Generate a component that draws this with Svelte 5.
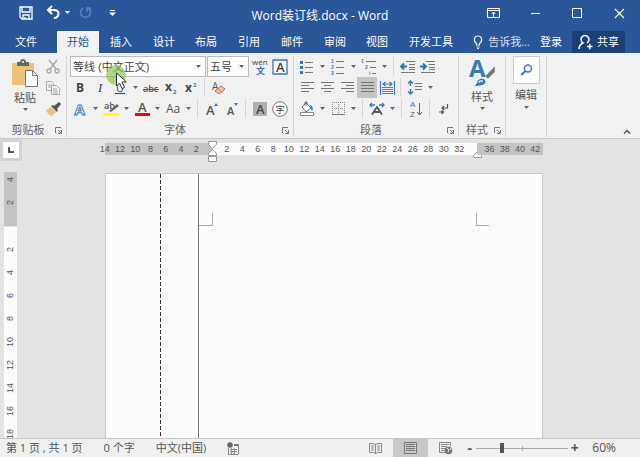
<script lang="ts">
  type Icon = { w: number; h: number; body: string };
  type Tool = { icon?: string; label?: string; arrow?: boolean; active?: boolean; sep?: boolean };

  const tabs = ['开始', '插入', '设计', '布局', '引用', '邮件', '审阅', '视图', '开发工具'];
  let activeTab = $state('开始');
  let zoom = $state(27);

  const lines = (rows: number[][]) =>
    `<g stroke="#777">${rows.map(([x1, x2, y]) => `<path d="M${x1} ${y}H${x2}"/>`).join('')}</g>`;

  const icons: Record<string, Icon> = {
    save: { w: 14, h: 14, body: '<path d="M1 1h12v12H3l-2-2zM3 1v5h8V1M4 13V9h6v4M6 11v2" fill="none" stroke="#fff" stroke-width="1.3"/>' },
    undo: { w: 14, h: 13, body: '<path d="M2 4h6c6 0 6 7 0 8M6 0L2 4l4 4" fill="none" stroke="#fff" stroke-width="2"/>' },
    redo: { w: 13, h: 13, body: '<path d="M4 2a5 5 0 1 0 5 0M8 6V2h4" fill="none" stroke="#5c81bd" stroke-width="1.6"/>' },
    custom: { w: 7, h: 7, body: '<path d="M1 1.5h5" stroke="#fff"/><path d="M0 3.500h7L3.500 7z" fill="#fff"/>' },
    ribbonOpts: { w: 13, h: 10, body: '<path d="M.5.500h12v9H.5zM.5 2.500h12M6.500 9V4M4.500 6l2-2 2 2" fill="none" stroke="#fff"/>' },
    minimize: { w: 11, h: 11, body: '<path d="M1 5.500h9" stroke="#fff"/>' },
    maximize: { w: 10, h: 10, body: '<path d="M.5.500h9v9H.5z" fill="none" stroke="#fff"/>' },
    close: { w: 11, h: 11, body: '<path d="M1 1l9 9M10 1l-9 9" stroke="#fff" stroke-width="1.1"/>' },
    bulb: { w: 10, h: 14, body: '<path d="M3.500 10V8.500C0 6 1 1 5 1s5 5 1.500 7.500V10zM3.500 12h3M4 13.500h2" fill="none" stroke="#e3ebf7" stroke-width="1.200"/>' },
    share: { w: 15, h: 15, body: '<path d="M1 14c0-4 2-5 4-6a4 4 0 1 1 4 0M9 11.500h5.500M11.800 8.800v5.500" fill="none" stroke="#fff" stroke-width="1.500"/>' },
    paste: { w: 28, h: 29, body: '<path d="M1 4h22v22H1z" fill="#ebc377"/><path d="M6 7V3h3c0-4 6-4 6 0h3v4z" fill="#666"/><circle cx="12" cy="3" r="1" fill="#fff"/><path d="M14.500 11.500h7l5 5v11h-12z" fill="#fff" stroke="#777"/><path d="M21.500 11.500v5h5" fill="none" stroke="#777"/>' },
    cut: { w: 14, h: 14, body: '<g fill="none" stroke="#aaa" stroke-width="1.400"><path d="M3 0l7 9M11 0L4 9"/><circle cx="3" cy="11" r="2"/><circle cx="11" cy="11" r="2"/></g>' },
    copy: { w: 14, h: 14, body: '<g fill="#f4f4f4" stroke="#aaa"><path d="M.5.500h5l2 2v7h-7zM2 4h4M2 6h4"/><path d="M5.500 4.500h5l3 3v6h-8zM7 8h4M7 10h5M7 12h5"/></g>' },
    brush: { w: 15, h: 14, body: '<path d="M0 8l5-3 5 5-4 4C3 13 1 11 0 8z" fill="#ebc377"/><path d="M5 4l2-1 5 5-1 2zM8 4l5-4 2 2-4 5z" fill="#555"/>' },
    bold: { w: 12, h: 14, body: '<text x="2" y="11" font-size="12" font-weight="700" fill="#444">B</text>' },
    italic: { w: 12, h: 14, body: '<text x="4" y="11" font-size="13" font-style="italic" font-family="Liberation Serif, serif" fill="#444">I</text>' },
    underline: { w: 12, h: 14, body: '<text x="2" y="11" font-size="11" fill="#444">U</text><path d="M1 12.500h10" stroke="#444"/>' },
    strike: { w: 16, h: 14, body: '<text x="0" y="11" font-size="9" font-weight="600" fill="#555">abc</text><path d="M0 8.500h16" stroke="#555"/>' },
    sub: { w: 14, h: 14, body: '<text x="1" y="10" font-size="12" font-weight="700" fill="#444">x</text><text x="9" y="13" font-size="6" font-weight="700" fill="#3b78b8">2</text>' },
    sup: { w: 14, h: 14, body: '<text x="1" y="11" font-size="12" font-weight="700" fill="#444">x</text><text x="9" y="6" font-size="6" font-weight="700" fill="#3b78b8">2</text>' },
    eraser: { w: 14, h: 14, body: '<text x="0" y="9" font-size="10" fill="#555">A</text><path d="M3 10l6-5 4 3-6 5z" fill="#f6c3bd" stroke="#d35d51"/><path d="M6 8l4 3" stroke="#d35d51"/>' },
    effect: { w: 14, h: 14, body: '<text x="1.500" y="12.500" font-size="15" font-weight="700" fill="#fff" stroke="#3b78b8">A</text>' },
    highlight: { w: 17, h: 16, body: '<text x="1" y="8" font-size="9" font-weight="600" fill="#555">ab</text><path d="M6 10l8-7 2 2-8 6z" fill="#666"/><path d="M0 12h16v3H0z" fill="#ff0"/>' },
    color: { w: 15, h: 16, body: '<text x="3" y="11" font-size="13" font-weight="600" fill="#555">A</text><path d="M0 12h15v3H0z" fill="#f00"/>' },
    letterCase: { w: 17, h: 14, body: '<text x="1" y="11" font-size="12" fill="#555">Aa</text>' },
    grow: { w: 14, h: 14, body: '<text x="1" y="13" font-size="13" font-weight="600" fill="#555">A</text><path d="M9 4l2-3 2 3z" fill="#3b78b8"/>' },
    shrink: { w: 14, h: 14, body: '<text x="2" y="13" font-size="11" font-weight="600" fill="#555">A</text><path d="M9 1h4l-2 3z" fill="#3b78b8"/>' },
    shade: { w: 14, h: 14, body: '<path d="M0 0h14v14H0z" fill="#b0b0b0"/><text x="3" y="12" font-size="13" font-weight="600" fill="#444">A</text>' },
    circled: { w: 16, h: 16, body: '<circle cx="8" cy="8" r="7.300" fill="#fff" stroke="#777"/><text x="3.500" y="11.500" font-size="9" fill="#444">字</text>' },
    wen: { w: 16, h: 18, body: '<text x="0" y="7" font-size="8" fill="#444">wén</text><text x="4" y="16" font-size="9" font-weight="700" fill="#3b78b8">文</text>' },
    boxed: { w: 16, h: 16, body: '<path d="M1 1h14v14H1z" fill="#f8f8f8" stroke="#3b78b8" stroke-width="1.300"/><text x="4" y="13" font-size="13" font-weight="600" fill="#444">A</text>' },
    bullets: { w: 14, h: 14, body: '<path d="M0 1h3v3H0zM0 6h3v3H0zM0 11h3v3H0z" fill="#3b78b8"/>' + lines([[5, 13, 2.5], [5, 13, 7.5], [5, 13, 12.5]]) },
    numbers: { w: 14, h: 16, body: '<g font-size="5" font-weight="700" font-family="Liberation Sans, sans-serif" fill="#3b78b8"><text x="0" y="4">1</text><text x="0" y="10">2</text><text x="0" y="16">3</text></g>' + lines([[5, 13, 2.5], [5, 13, 8.5], [5, 13, 14.5]]) },
    levels: { w: 16, h: 16, body: '<g font-size="5" font-weight="700" font-family="Liberation Sans, sans-serif" fill="#3b78b8"><text x="0" y="4">1</text><text x="4" y="10">2</text><text x="8" y="16">i</text></g>' + lines([[5, 15, 2.5], [9, 15, 8.5], [11, 15, 14.5]]) },
    outdent: { w: 16, h: 12, body: '<path d="M7 5.500H1M4 2.500l-3 3 3 3" fill="none" stroke="#2f6fb5" stroke-width="1.800"/>' + lines([[6, 15, 0.5], [9, 15, 3.5], [9, 15, 6.5], [9, 15, 8.5], [1, 15, 11.5]]) },
    indent: { w: 16, h: 12, body: '<path d="M0 5.500h6M3 2.500l3 3-3 3" fill="none" stroke="#2f6fb5" stroke-width="1.800"/>' + lines([[6, 15, 0.5], [9, 15, 3.5], [9, 15, 6.5], [9, 15, 8.5], [1, 15, 11.5]]) },
    left: { w: 13, h: 11, body: lines([[0, 13, 0.5], [0, 8, 3.5], [0, 13, 6.5], [0, 8, 9.5]]) },
    center: { w: 13, h: 11, body: lines([[0, 13, 0.5], [3, 10, 3.5], [0, 13, 6.5], [3, 10, 9.5]]) },
    right: { w: 13, h: 11, body: lines([[0, 13, 0.5], [5, 13, 3.5], [0, 13, 6.5], [5, 13, 9.5]]) },
    justify: { w: 13, h: 11, body: lines([[0, 13, 0.5], [0, 13, 3.5], [0, 13, 6.5], [0, 13, 9.5]]) },
    distribute: { w: 15, h: 14, body: '<path d="M.5 0v14M14.500 0v14M3 3h9M5.500 1L3 3l2.500 2M9.500 1L12 3 9.500 5" fill="none" stroke="#3b78b8" stroke-width="1.200"/>' + lines([[2, 13, 6.5], [2, 13, 8.5], [2, 13, 10.5], [2, 13, 12.5]]) },
    spacing: { w: 14, h: 15, body: '<path d="M2.500 1v5M0 3.500L2.500 1 5 3.500M2.500 9v5M0 11.500L2.500 14 5 11.500" fill="none" stroke="#3b78b8" stroke-width="1.500"/>' + lines([[7, 14, 3.5], [7, 14, 6.5], [7, 14, 9.5]]) },
    bucket: { w: 16, h: 15, body: '<path d="M3 6l4-4 5 5-5 4zM6 5V1h2v3" fill="#fff" stroke="#666"/><path d="M11 4c3 1 3 3 2.500 6-1-1-2-2-2-4z" fill="#3b78b8"/><path d="M1.500 11.500h13v3h-13z" fill="#fff" stroke="#888"/>' },
    borders: { w: 13, h: 13, body: '<path d="M.5 0v13M6.500 0v13M12.500 0v13M0 .5h13M0 6.500h13" fill="none" stroke="#888" stroke-dasharray="1 1"/><path d="M0 12.500h13" stroke="#777"/>' },
    fit: { w: 16, h: 14, body: '<path d="M3 12.500L8 5l5 7.500M5.500 10h5" fill="none" stroke="#555" stroke-width="1.800"/><path d="M6 3H1M3 1L1 3l2 2M10 3h5M13 1l2 2-2 2" fill="none" stroke="#3b78b8" stroke-width="1.400"/>' },
    sort: { w: 14, h: 16, body: '<g font-size="8" font-family="Liberation Sans, sans-serif"><text x="1" y="6" fill="#3b78b8">A</text><text x="1" y="16" fill="#666">Z</text></g><path d="M10.500 2v12M8 11l2.500 3 2.500-3" fill="none" stroke="#666"/>' },
    mark: { w: 12, h: 14, body: '<path d="M9.500 2v4H4M6 4L4 6l2 2M1 10h4M3.500 8.500l2 1.500-2 2" fill="none" stroke="#555" stroke-width="1.200"/>' },
    styles: { w: 26, h: 28, body: '<text x="0" y="18" font-size="24" font-weight="700" fill="#3b78b8">A</text><path d="M26 7v6l-7 7-3-3z" fill="#777" stroke="#f1f1f1" stroke-width=".5"/><path d="M4 27c4-1 3-4 6-7 3-2 7 0 7 3-1 4-8 5-13 4z" fill="#3b78b8" stroke="#f1f1f1"/><path d="M10 23.500c1-2 3-2 4-1" fill="none" stroke="#fff" stroke-width="1.200"/>' },
    find: { w: 13, h: 12, body: '<circle cx="8" cy="4.500" r="3.500" fill="none" stroke="#3b78b8" stroke-width="1.500"/><path d="M5.500 7L1 11" stroke="#3b78b8" stroke-width="2"/>' },
    macro: { w: 13, h: 13, body: '<circle cx="3" cy="3" r="2.800" fill="#666"/><path d="M7 2h5v2H7z" fill="#777"/><path d="M1.500 6v6.500h10V3M3 7.500h7M3 9.500h7" fill="none" stroke="#888"/><path d="M4.500 6v6M7.500 6v6" stroke="#999"/>' },
    read: { w: 13, h: 12, body: '<path d="M6.500 2v10M.5 1.500h4l2 1 2-1h4v9h-4l-2 1-2-1h-4zM2 4h3M2 6h3M2 8h3M8 4h3M8 6h3M8 8h3" fill="none" stroke="#888"/>' },
    print: { w: 13, h: 12, body: '<path d="M.5.500h12v11H.5zM2 2.500h9M2 4.500h9M2 6.500h9M2 8.500h9" fill="none" stroke="#777"/>' },
    web: { w: 14, h: 13, body: '<path d="M6 10.500H.5V.5h11v4M2 2.500h8M2 4.500h6M2 6.500h4M2 8.500h4" fill="none" stroke="#888"/><circle cx="9.500" cy="8.500" r="3.800" fill="#777"/><path d="M8 6l2 2-1 2M11 6l1 2" fill="none" stroke="#eee"/>' },
    arrow: { w: 5, h: 3, body: '<path d="M0 0h5L2.500 3z" fill="#666"/>' },
    arrowLight: { w: 5, h: 3, body: '<path d="M0 0h5L2.500 3z" fill="#fff"/>' },
    launcher: { w: 7, h: 7, body: '<path d="M.5 6V.5H6M3 3l3 3M6.500 3v3.500H3" fill="none" stroke="#777"/>' },
    collapse: { w: 8, h: 5, body: '<path d="M1 4.500l3-3 3 3" fill="none" stroke="#555" stroke-width="1.500"/>' },
    tabStop: { w: 6, h: 6, body: '<path d="M1 0v5h5" fill="none" stroke="#555" stroke-width="2"/>' },
    firstIndent: { w: 9, h: 21, body: '<path d="M.5.500h8v3l-4 4-4-4zM.5 14.500v-2l4-4 4 4v2zM.5 15.500h8v5h-8z" fill="#fff" stroke="#999"/>' },
    rightIndent: { w: 9, h: 7, body: '<path d="M.5 6.500v-2l4-4 4 4v2z" fill="#fff" stroke="#999"/>' },
    pointer: { w: 12, h: 18, body: '<path d="M.5 1v13l3-3 2.500 5.500 2.500-1L6 10h4.500z" fill="#fff" stroke="#333"/>' }
  };

  const sep: Tool = { sep: true };

  const fontRows: Tool[][] = [
    [
      { icon: 'bold', label: '加粗' },
      { icon: 'italic', label: '倾斜' },
      { icon: 'underline', label: '下划线', arrow: true },
      { icon: 'strike', label: '删除线' },
      { icon: 'sub', label: '下标' },
      { icon: 'sup', label: '上标' },
      sep,
      { icon: 'eraser', label: '清除格式' }
    ],
    [
      { icon: 'effect', label: '文本效果', arrow: true },
      { icon: 'highlight', label: '突出显示', arrow: true },
      { icon: 'color', label: '字体颜色', arrow: true },
      { icon: 'letterCase', label: '更改大小写', arrow: true },
      sep,
      { icon: 'grow', label: '增大字号' },
      { icon: 'shrink', label: '减小字号' },
      sep,
      { icon: 'shade', label: '字符底纹' },
      { icon: 'circled', label: '带圈字符' }
    ]
  ];

  const paragraphRows: Tool[][] = [
    [
      { icon: 'bullets', label: '项目符号', arrow: true },
      { icon: 'numbers', label: '编号', arrow: true },
      { icon: 'levels', label: '多级列表', arrow: true },
      sep,
      { icon: 'outdent', label: '减少缩进量' },
      { icon: 'indent', label: '增加缩进量' }
    ],
    [
      { icon: 'left', label: '左对齐' },
      { icon: 'center', label: '居中' },
      { icon: 'right', label: '右对齐' },
      { icon: 'justify', label: '两端对齐', active: true },
      { icon: 'distribute', label: '分散对齐' },
      sep,
      { icon: 'spacing', label: '行和段落间距', arrow: true }
    ],
    [
      { icon: 'bucket', label: '底纹', arrow: true },
      { icon: 'borders', label: '边框', arrow: true },
      sep,
      { icon: 'fit', label: '中文版式', arrow: true },
      sep,
      { icon: 'sort', label: '排序' },
      sep,
      { icon: 'mark', label: '显示编辑标记' }
    ]
  ];

  const rulerLeft = [14, 12, 10, 8, 6, 4, 2];
  const rulerBody = Array.from({ length: 16 }, (_, i) => (i + 1) * 2);
  const rulerRight = [36, 38, 40, 42];
  const rulerDown = Array.from({ length: 9 }, (_, i) => (i + 1) * 2);
</script>

{#snippet glyph(name: string)}
  <svg width={icons[name].w} height={icons[name].h} viewBox="0 0 {icons[name].w} {icons[name].h}" aria-hidden="true">
    {@html icons[name].body}
  </svg>
{/snippet}

{#snippet toolRow(tools: Tool[])}
  <div class="tool-row">
    {#each tools as tool}
      {#if tool.sep}
        <span class="tool-sep"></span>
      {:else}
        <button class="tool" class:active={tool.active} aria-label={tool.label}>{@render glyph(tool.icon ?? '')}</button>
        {#if tool.arrow}
          <button class="drop" aria-label="{tool.label}选项">{@render glyph('arrow')}</button>
        {/if}
      {/if}
    {/each}
  </div>
{/snippet}

<div class="app">
  <header class="title-bar">
    <div class="quick">
      <button aria-label="保存">{@render glyph('save')}</button>
      <button class="undo" aria-label="撤消">{@render glyph('undo')}{@render glyph('arrowLight')}</button>
      <button class="redo" aria-label="重复">{@render glyph('redo')}</button>
      <button aria-label="自定义快速访问工具栏">{@render glyph('custom')}</button>
    </div>
    <h1>Word装订线.docx - Word</h1>
    <div class="window-buttons">
      <button aria-label="功能区显示选项">{@render glyph('ribbonOpts')}</button>
      <button aria-label="最小化">{@render glyph('minimize')}</button>
      <button aria-label="最大化">{@render glyph('maximize')}</button>
      <button aria-label="关闭">{@render glyph('close')}</button>
    </div>
  </header>

  <nav class="tabs">
    <button class="file">文件</button>
    {#each tabs as tab}
      <button class="tab" class:selected={activeTab === tab} onclick={() => (activeTab = tab)}>{tab}</button>
    {/each}
    <div class="account">
      <button class="tell">{@render glyph('bulb')}告诉我...</button>
      <button class="login">登录</button>
      <button class="share">{@render glyph('share')}共享</button>
    </div>
  </nav>

  <section class="ribbon">
    <div class="group clipboard">
      <div class="group-body">
        <button class="big">{@render glyph('paste')}<span>粘贴</span>{@render glyph('arrow')}</button>
        <div class="stack">
          <button class="tool" aria-label="剪切">{@render glyph('cut')}</button>
          <button class="tool" aria-label="复制">{@render glyph('copy')}</button>
          <button class="tool" aria-label="格式刷">{@render glyph('brush')}</button>
        </div>
      </div>
      <div class="group-foot"><span>剪贴板</span><button aria-label="剪贴板设置">{@render glyph('launcher')}</button></div>
    </div>

    <div class="group font">
      <div class="group-body rows">
        <div class="tool-row">
          <div class="combo family">
            <select aria-label="字体"><option>等线 (中文正文)</option></select>
            <span class="combo-arrow">{@render glyph('arrow')}</span>
            <span class="click-spot">{@render glyph('pointer')}</span>
          </div>
          <div class="combo size">
            <select aria-label="字号"><option>五号</option></select>
            <span class="combo-arrow">{@render glyph('arrow')}</span>
          </div>
          <button class="tool" aria-label="拼音指南">{@render glyph('wen')}</button>
          <button class="tool" aria-label="字符边框">{@render glyph('boxed')}</button>
        </div>
        {#each fontRows as row}
          {@render toolRow(row)}
        {/each}
      </div>
      <div class="group-foot"><span>字体</span><button aria-label="字体设置">{@render glyph('launcher')}</button></div>
    </div>

    <div class="group paragraph">
      <div class="group-body rows">
        {#each paragraphRows as row}
          {@render toolRow(row)}
        {/each}
      </div>
      <div class="group-foot"><span>段落</span><button aria-label="段落设置">{@render glyph('launcher')}</button></div>
    </div>

    <div class="group styles">
      <div class="group-body">
        <button class="big">{@render glyph('styles')}<span>样式</span>{@render glyph('arrow')}</button>
      </div>
      <div class="group-foot"><span>样式</span><button aria-label="样式窗格">{@render glyph('launcher')}</button></div>
    </div>

    <div class="group editing">
      <div class="group-body">
        <button class="big"><i class="find-box">{@render glyph('find')}</i><span>编辑</span>{@render glyph('arrow')}</button>
      </div>
    </div>

    <button class="collapse" aria-label="折叠功能区">{@render glyph('collapse')}</button>
  </section>

  <main class="workspace">
    <div class="side">
      <button class="tab-stop" aria-label="制表符"><i>{@render glyph('tabStop')}</i></button>
      <div class="v-ruler">
        <div class="v-margin"><span>4</span><span>2</span></div>
        <div class="v-body">
          {#each rulerDown as n}<span>{n}</span>{/each}
        </div>
      </div>
    </div>
    <div class="canvas">
      <div class="h-ruler">
        <div class="h-left">{#each rulerLeft as n}<span>{n}</span>{/each}</div>
        <div class="h-body">
          {#each rulerBody as n}<span>{n}</span>{/each}
          <i class="marker start">{@render glyph('firstIndent')}</i>
          <i class="marker end">{@render glyph('rightIndent')}</i>
        </div>
        <div class="h-right">{#each rulerRight as n}<span>{n}</span>{/each}</div>
      </div>
      <article class="page">
        <div class="gutter">
          <div class="binding"></div>
          <div class="edge"></div>
          <div class="corner corner-left"></div>
        </div>
        <div class="text-area"></div>
        <div class="margin-right"><div class="corner corner-right"></div></div>
      </article>
    </div>
  </main>

  <footer class="status">
    <span>第 1 页 , 共 1 页</span>
    <span>0 个字</span>
    <span>中文(中国)</span>
    <button aria-label="宏录制">{@render glyph('macro')}</button>
    <div class="views">
      <button class="view" aria-label="阅读视图">{@render glyph('read')}</button>
      <button class="view current" aria-label="页面视图">{@render glyph('print')}</button>
      <button class="view" aria-label="Web 版式视图">{@render glyph('web')}</button>
      <button class="step" aria-label="缩小">-</button>
      <input type="range" min="0" max="100" bind:value={zoom} aria-label="显示比例" />
      <button class="step" aria-label="放大">+</button>
      <button class="percent">60%</button>
    </div>
  </footer>
</div>

<style>
  :global(body) {
    margin: 0;
  }

  .app {
    display: flex;
    flex-direction: column;
    height: 100vh;
    overflow: hidden;
    background: #e3e3e3;
    color: #555;
    font-family: 'Open Sans', 'Noto Sans CJK SC', sans-serif;
    font-size: 11px;
    line-height: 16px;
  }

  button {
    display: flex;
    align-items: center;
    justify-content: center;
    flex: none;
    margin: 0;
    padding: 0;
    border: 0;
    background: none;
    color: inherit;
    font: inherit;
    white-space: nowrap;
  }

  svg {
    display: block;
    flex: none;
    overflow: visible;
  }

  .title-bar {
    display: grid;
    grid-template-columns: 1fr auto 1fr;
    align-items: center;
    height: 31px;
    background: #2a569a;
    color: #fff;
  }

  .quick {
    display: flex;
    align-items: center;
    gap: 13px;
    padding: 0 0 6px 19px;
  }

  .quick .undo {
    gap: 5px;
  }

  .quick .redo {
    margin-left: -5px;
    margin-right: 4px;
    padding-left: 1px;
  }

  h1 {
    margin: 0;
    font-size: 12px;
    font-weight: 400;
  }

  .window-buttons {
    display: flex;
    justify-content: flex-end;
    padding: 0 0 5px;
  }

  .window-buttons button {
    width: 42px;
  }

  .tabs {
    display: flex;
    height: 22px;
    background: #2a569a;
    color: #fff;
  }

  .file {
    width: 52px;
    margin-right: 5px;
  }

  .tab {
    padding: 0 10px;
    margin-right: 1px;
  }

  .tab:nth-of-type(4n) {
    margin-right: 0;
  }

  .tab.selected {
    background: #f3f3f3;
    color: #2a569a;
  }

  .account {
    display: flex;
    flex: 1;
    justify-content: flex-end;
    gap: 10px;
    padding-right: 15px;
  }

  .tell {
    gap: 5px;
    color: #d3def0;
  }

  .share {
    gap: 4px;
    padding: 0 6px;
    background: #1b4078;
  }

  .ribbon {
    display: flex;
    height: 85px;
    border-bottom: 1px solid #c9c9c9;
    background: #f1f1f1;
  }

  .group {
    display: flex;
    flex-direction: column;
    justify-content: space-between;
    margin: 3px 0 1px;
    border-right: 1px solid #d2d2d2;
  }

  .clipboard {
    padding: 0 3px;
    width: 60px;
  }

  .font {
    padding: 0 3px;
  }

  .paragraph {
    padding: 0 3px;
    width: 158px;
  }

  .styles {
    padding: 0 3px;
    width: 40px;
  }

  .editing {
    width: 40px;
  }

  .group-body {
    display: flex;
    justify-content: center;
  }

  .clipboard .group-body {
    justify-content: flex-end;
  }

  .rows {
    flex-direction: column;
  }

  .tool-row {
    display: flex;
    height: 21px;
  }

  .tool {
    width: 20px;
    height: 21px;
  }

  .tool.active {
    background: #c5c5c5;
  }

  .drop {
    width: 11px;
  }

  .tool-sep {
    width: 1px;
    margin: 1px 4px 1px 3px;
    background: #d5d5d5;
  }

  .big {
    flex-direction: column;
    justify-content: flex-start;
    gap: 3px;
    min-width: 36px;
    padding-top: 3px;
    line-height: 14px;
  }

  .find-box {
    display: flex;
    align-items: center;
    justify-content: center;
    width: 25px;
    height: 26px;
    border: 1px solid #ccc;
    background: #fff;
  }

  .editing .big {
    gap: 4px;
    padding-top: 0;
  }

  .group-foot {
    display: flex;
    align-items: center;
    height: 14px;
    color: #666;
  }

  .group-foot span {
    flex: 1;
    text-align: center;
    white-space: nowrap;
  }

  .group-foot button {
    width: 10px;
  }

  .combo {
    position: relative;
    margin-right: 1px;
    border: 1px solid #bbb;
    background: #fff;
  }

  .family {
    width: 134px;
  }

  .size {
    width: 40px;
  }

  .combo select {
    width: 100%;
    height: 100%;
    padding: 0 2px;
    border: 0;
    background: none;
    color: #444;
    font: inherit;
    font-family: 'Liberation Sans', 'Noto Sans CJK SC', sans-serif;
    font-size: 11px;
    appearance: none;
  }

  .combo-arrow {
    position: absolute;
    top: 8px;
    right: 4px;
    pointer-events: none;
  }

  .click-spot {
    position: absolute;
    z-index: 2;
    top: 8px;
    left: 35px;
    width: 20px;
    height: 20px;
    border-radius: 50%;
    background: rgba(135, 190, 75, 0.65);
    pointer-events: none;
  }

  .click-spot svg {
    margin: 7px 0 0 10px;
  }

  .collapse {
    align-self: flex-end;
    width: 26px;
    height: 14px;
    margin-left: auto;
  }

  .workspace {
    display: flex;
    flex: 1;
    min-height: 0;
    overflow: hidden;
    font-family: 'Liberation Sans', sans-serif;
    font-size: 9px;
  }

  .side {
    display: flex;
    flex-direction: column;
    width: 22px;
  }

  .tab-stop {
    width: 22px;
    height: 22px;
    margin-bottom: 11px;
    background: #d3d3d3;
  }

  .tab-stop i {
    display: flex;
    align-items: center;
    justify-content: center;
    width: 16px;
    height: 16px;
    background: #fff;
  }

  .v-ruler {
    display: flex;
    flex: 1;
    flex-direction: column;
    min-height: 0;
    width: 13px;
    margin-left: 4px;
    overflow: hidden;
  }

  .v-ruler span {
    display: block;
    flex: none;
    width: 13px;
    height: 23px;
    line-height: 13px;
    text-align: center;
    writing-mode: vertical-rl;
    transform: rotate(180deg);
  }

  .v-margin {
    flex: none;
    height: 58px;
    margin-top: -4px;
    background: #c3c3c3;
  }

  .v-body {
    flex: none;
    padding-top: 11px;
    border-top: 1px solid #e3e3e3;
    background: #fcfcfc;
  }

  .canvas {
    display: flex;
    flex: 1;
    flex-direction: column;
    padding: 4px 97px 0 83px;
  }

  .h-ruler,
  .page {
    display: grid;
    grid-template-columns: 107fr 265fr 66fr;
  }

  .h-ruler {
    height: 12px;
    margin-bottom: 18px;
    line-height: 12px;
  }

  .h-ruler > div {
    position: relative;
    display: flex;
    background: #c3c3c3;
  }

  .h-ruler span {
    flex: 1 1 0;
    min-width: 0;
    display: flex;
    justify-content: center;
  }

  .h-ruler .h-left {
    padding-right: 8px;
  }

  .h-left span:first-child {
    margin-left: -8px;
  }

  .h-ruler .h-body {
    padding: 0 10px 0 7px;
    background: #fcfcfc;
  }

  .h-ruler .h-right {
    padding-left: 5px;
  }

  .marker {
    position: absolute;
  }

  .start {
    top: -2px;
    left: -4px;
  }

  .end {
    right: -5px;
    bottom: -3px;
  }

  .page {
    flex: 1;
    border: 1px solid #c8c8c8;
    border-bottom: 0;
    background: #fcfcfc;
  }

  .gutter {
    display: grid;
    grid-template-columns: 55fr 38fr 14px;
  }

  .binding {
    background: repeating-linear-gradient(to bottom, #333 0 4px, #fcfcfc 4px 6px) right / 1px 100% no-repeat;
  }

  .edge {
    border-right: 1px solid #777;
  }

  .corner {
    width: 12px;
    height: 12px;
    margin-top: 39px;
    border-bottom: 1px solid #aaa;
  }

  .corner-left {
    width: auto;
    border-right: 1px solid #aaa;
  }

  .corner-right {
    border-left: 1px solid #aaa;
  }

  .status {
    display: flex;
    align-items: center;
    gap: 21px;
    height: 18px;
    padding-left: 6px;
    border-top: 1px solid #c6c6c6;
    background: #f0f0f0;
  }

  .status span {
    white-space: nowrap;
  }

  .views {
    display: flex;
    align-items: center;
    align-self: stretch;
    margin-left: auto;
    padding-right: 24px;
  }

  .view {
    align-self: stretch;
    width: 35px;
  }

  .current {
    background: #c8c8c8;
  }

  .step {
    width: 13px;
    font-size: 14px;
    font-weight: 700;
  }

  .percent {
    margin-left: 11px;
    font-size: 12px;
  }

  input[type='range'] {
    width: 92px;
    height: 16px;
    margin: 0;
    appearance: none;
    background:
      linear-gradient(#aaa, #aaa) center / 1px 5px no-repeat,
      linear-gradient(#aaa, #aaa) center / 100% 1px no-repeat;
  }

  input[type='range']::-webkit-slider-thumb {
    appearance: none;
    width: 4px;
    height: 10px;
    background: #555;
  }
</style>
